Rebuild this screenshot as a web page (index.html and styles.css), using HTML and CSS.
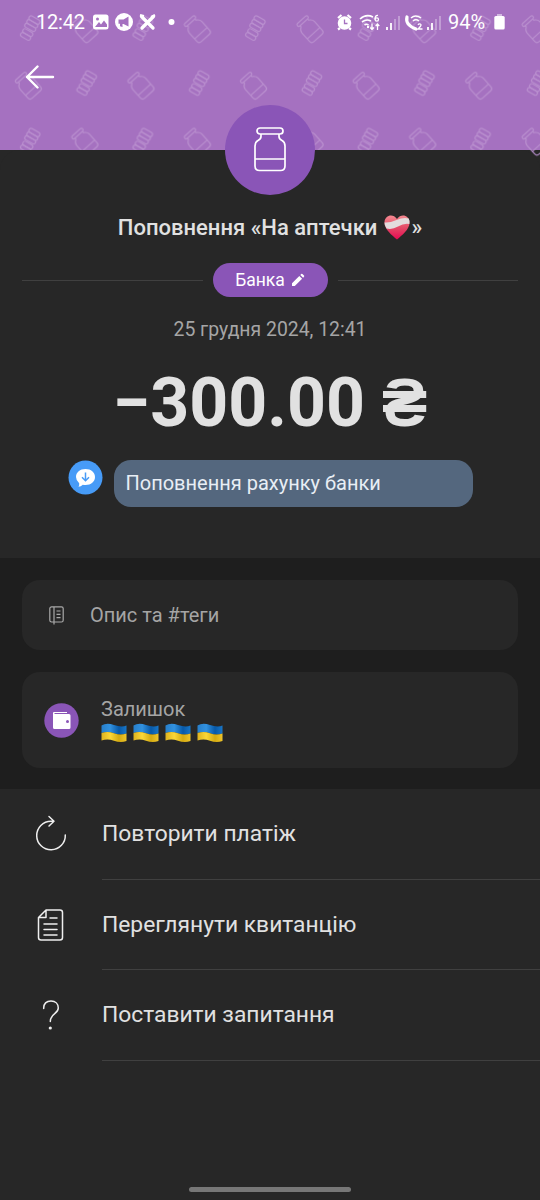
FILE: index.html
```html
<!DOCTYPE html>
<html lang="uk">
<head>
<meta charset="utf-8">
<title>Поповнення</title>
<link rel="stylesheet" href="styles.css">
</head>
<body>
<header class="hero">
  <svg class="hero-pattern" width="540" height="170">
    <defs>
      <g id="coins">
        <g transform="rotate(30)">
          <rect x="-6" y="-12" width="12" height="4.4" rx="2.2"/>
          <rect x="-6" y="-7.6" width="12" height="4.2" rx="2.1"/>
          <rect x="-6" y="-3.4" width="12" height="4.2" rx="2.1"/>
          <rect x="-5" y="2.2" width="11" height="4.4" rx="2.2"/>
          <rect x="-5" y="6.6" width="11" height="4.4" rx="2.2"/>
        </g>
      </g>
      <g id="jar">
        <g transform="rotate(-42)">
          <rect x="-7" y="-13" width="14" height="3.4" rx="1.7"/>
          <path d="M-5-9.6v1.5Q-8.5-6-8.5-3V8.500q0 3 3 3h11q3 0 3-3V-3q0-3-3.500-5.100v-1.500M-8.500 5h17"/>
        </g>
      </g>
      <pattern id="wallpaper" width="112.600" height="112.500" patternUnits="userSpaceOnUse">
        <use href="#coins" x="29.500" y="28.500"/>
        <use href="#jar" x="85" y="29.500"/>
        <use href="#jar" x="28.500" y="86"/>
        <use href="#coins" x="86" y="83.500"/>
      </pattern>
    </defs>
    <rect class="wall" width="540" height="170" fill="url(#wallpaper)"/>
  </svg>
  <div class="status">
    <span class="clock">12:42</span>
    <svg class="status-left" width="90" height="20" viewBox="0 0 90 20">
      <rect x="1" y="2.500" width="15.500" height="15" rx="2.500" fill="#fff"/>
      <circle cx="5.500" cy="7" r="1.500" fill="#a571c0"/>
      <path d="M3 15l4-5 2 2.500 3-4 3 4V15z" fill="#a571c0"/>
      <circle cx="32" cy="10" r="9" fill="#fff"/>
      <path d="M26.500 7.500h5l5-3v10l-5-2.500h-1v3l-2.500-.8v-2.500h-1.500z" fill="#a571c0"/>
      <path d="M49.500 4.500L61 16M61.500 4.500L50 16" stroke="#fff" stroke-width="3.300" stroke-linecap="round"/>
      <path d="M48 3l4 1M63 3l-4 2" stroke="#fff" stroke-width="2"/>
      <circle cx="79.500" cy="10" r="3" fill="#fff"/>
    </svg>
    <svg class="status-right" width="112" height="20" viewBox="0 0 112 20" fill="none" stroke="#fff" stroke-width="1.600">
      <circle cx="7.500" cy="11" r="6" fill="#fff"/>
      <path d="M1 6l3.500-3M14 6l-3.500-3M3 16l-2 1.500M12 16l2 1.500" stroke-width="2.200"/>
      <path d="M7.500 7.500v4h3" stroke="#a571c0" stroke-width="1.300"/>
      <path d="M23 7q6-5.500 13-2M25 10q4.500-3.500 9-1M27.500 13q2-1.500 4 0"/>
      <circle cx="31" cy="15" r="1.200" fill="#fff" stroke="none"/>
      <path d="M41 3.500q-3-.5-3 4M35 11.500v6m-1.800-2l1.800 2 1.800-2M40.500 18v-6m-1.800 2l1.800-2 1.800 2" stroke-width="1.300"/>
      <circle cx="39.800" cy="7.500" r="1.700" stroke-width="1.300"/>
      <path d="M50 18v-3M54 18v-7" stroke-width="1.800"/>
      <path d="M58 18V7M62 18V4" stroke-width="1.800" opacity=".35"/>
      <path d="M70 5q-2 8 9 12" stroke-width="3.200" stroke-linecap="round"/>
      <path d="M74 6q4.500-4 10 0M76 9q3-2.500 6 0" stroke-width="1.500"/>
      <path d="M81 13q.8-1.500 2.300-1 1.600.8-.2 2.700L81 17h4.500" stroke-width="1.300"/>
      <path d="M91 18v-3M95 18v-7" stroke-width="1.800"/>
      <path d="M99 18V7M103 18V4" stroke-width="1.800" opacity=".35"/>
    </svg>
    <span class="percent">94%</span>
    <svg class="battery" width="11" height="18" viewBox="0 0 11 18"><path d="M3 1h5v3H3z" fill="#fff" opacity=".5"/><rect x=".3" y="3" width="10.400" height="13.500" rx="1.500" fill="#fff"/></svg>
  </div>
  <svg class="back" width="30" height="24" viewBox="0 0 30 24"><path d="M12.500 1.500L2 12l10.500 10.500M2 12h26" fill="none" stroke="#fff" stroke-width="2.400" stroke-linecap="round" stroke-linejoin="round"/></svg>
</header>

<main class="sheet">
  <section class="summary">
    <div class="avatar">
      <svg width="36" height="48" viewBox="0 0 36 48" fill="none" stroke="#fff" stroke-width="1.700"><rect x="5" y="2" width="26" height="6" rx="3"/><path d="M9 8v2.500Q9 13 6 14.500Q3 16 3 20v20q0 4.500 4.500 4.500h21q4.500 0 4.500-4.500V20q0-4-3-5.500-3-1.500-3-4V8M3 33h30"/></svg>
    </div>
    <h1 class="title">Поповнення «На аптечки
      <svg class="heart" width="26" height="25" viewBox="0 0 26 25"><defs><linearGradient id="pink" x2="0" y2="1"><stop stop-color="#f58a91"/><stop offset=".5" stop-color="#e34b67"/><stop offset="1" stop-color="#e60852"/></linearGradient></defs><path d="M13 24.500C8 20 0 14 .5 7 1 0 9-2 13 4 17-2 25 0 25.500 7c.5 7-7.500 13-12.500 17.500z" fill="url(#pink)"/><path d="M.5 7.500q5 .5 12-2.500t12.300-1.500q1 2 .6 5.500-5.500-1-11.400 2.500T2.500 13.500Q.3 10 .5 7.500z" fill="#e3dcdd"/></svg>»</h1>
    <div class="category">
      <span class="rule"></span>
      <span class="chip">Банка <svg width="14" height="14" viewBox="0 0 14 14" fill="#fff"><path d="M1 10.200L8.300 2.900l2.800 2.800L3.800 13H1zM9.300 1.900l.9-.9q.6-.5 1.200 0L13 2.600q.5.600 0 1.200l-.9.900z"/></svg></span>
      <span class="rule"></span>
    </div>
    <p class="date">25 грудня 2024, 12:41</p>
    <p class="amount"><span class="minus">−</span>300.00 ₴</p>
    <div class="comment">
      <svg width="35" height="35" viewBox="0 0 35 35"><circle cx="17.500" cy="17.500" r="17" fill="#479bf7"/><path d="M17.500 9c5.500 0 9.500 3.300 9.500 8s-4 8-9.500 8q-1.500 0-2.700-.3-1.800 2-4.300 2.100 1-1.500.7-3.600Q8 20.500 8 17c0-4.700 4-8 9.500-8z" fill="#fff"/><path d="M17.500 12.500v8m-3.500-3.300l3.500 3.500 3.500-3.500" fill="none" stroke="#479bf7" stroke-width="1.500"/></svg>
      <p class="bubble">Поповнення рахунку банки</p>
    </div>
  </section>

  <section class="details">
    <div class="card note">
      <svg width="16" height="20" viewBox="0 0 16 20" fill="none" stroke="#a9a9a9" stroke-width="1.200"><rect x=".8" y="1.800" width="13.400" height="15.200" rx="1.800"/><path d="M5 2v17.500M7.500 6h4M7.500 9.300h4M7.500 12.600h4"/></svg>
      <span>Опис та #теги</span>
    </div>
    <div class="card balance">
      <svg width="35" height="35" viewBox="0 0 35 35"><circle cx="17.500" cy="17.500" r="17.200" fill="#8a55b7"/><path d="M10 9h13v1H10.500v1H25q1.500 0 1.500 1.500v12Q26.500 26 25 26H10.500Q9 26 9 24.500V10q0-1 1-1z" fill="#fff"/><circle cx="23.500" cy="18.500" r="1.500" fill="#8a55b7"/></svg>
      <div>
        <p class="label">Залишок</p>
        <div class="flags">
          <svg viewBox="0 0 26 20"><defs><linearGradient id="blue"><stop stop-color="#277fcb"/><stop offset=".35" stop-color="#3291df"/><stop offset=".7" stop-color="#0759a8"/><stop offset="1" stop-color="#1976c7"/></linearGradient><linearGradient id="gold"><stop stop-color="#ddb320"/><stop offset=".35" stop-color="#fbd737"/><stop offset=".7" stop-color="#d4aa10"/><stop offset="1" stop-color="#efc52b"/></linearGradient></defs><g id="flag"><path d="M.5 2.500q5-3 12.500-.5t12.500.5v8q-6 2-12.500-.3T.5 10z" fill="url(#blue)"/><path d="M.5 10q6-2.200 12.500.2t12.500.3v7.500q-6 2-12.500-.3T.5 17.500z" fill="url(#gold)"/></g></svg>
          <svg viewBox="0 0 26 20"><use href="#flag"/></svg>
          <svg viewBox="0 0 26 20"><use href="#flag"/></svg>
          <svg viewBox="0 0 26 20"><use href="#flag"/></svg>
        </div>
      </div>
    </div>
  </section>

  <nav class="actions">
    <div class="action">
      <svg viewBox="0 0 34 38"><path d="M31.300 20A14.300 14.300 0 1 1 17 6.200h3M15 1.500l5 4.700-5 4.800"/></svg>
      <span>Повторити платіж</span>
    </div>
    <div class="action">
      <svg viewBox="0 0 34 38"><path d="M12 4h14q2.500 0 2.500 2.500v25Q28.500 34 26 34H7q-2.500 0-2.500-2.500V11.500zM12 4v7.500H4.500M16 12h7M10 18h13M10 23.500h13M10 29h13"/></svg>
      <span>Переглянути квитанцію</span>
    </div>
    <div class="action">
      <svg viewBox="0 0 34 38"><path d="M9.700 12.500C9.500 7.500 12.500 5 17 5s7.300 2.800 7.300 7c0 6-8 5.500-8 13.500"/><circle cx="16.300" cy="32" r="1.600" class="dot"/></svg>
      <span>Поставити запитання</span>
    </div>
  </nav>
  <div class="home-bar"></div>
</main>
</body>
</html>
```
FILE: styles.css
```css
* { box-sizing: border-box; }
body { margin: 0; width: 540px; height: 1200px; overflow: hidden; background: #272727; color: #e1e1e1; font-family: Roboto, sans-serif; font-size: 20px; }
p, h1 { margin: 0; }
svg { display: block; flex: none; }
.hero { position: relative; height: 150px; background: #a571c0; }
.hero-pattern { position: absolute; top: 0; left: 0; }
#coins, #jar { fill: none; stroke: #ba90cf; stroke-width: 1.1; }
.status { position: relative; display: flex; align-items: center; height: 44px; padding-left: 36px; color: #fff; }
.clock { width: 56px; font-size: 20px; letter-spacing: -.2px; }
.status-right { margin-left: 155px; }
.percent { margin-left: -1px; width: 46px; font-size: 20px; }
.battery { margin-left: 0; }
.back { position: relative; margin: 21px 0 0 25px; }
.sheet { position: relative; display: flex; flex-direction: column; height: 1050px; background: #272727; border-radius: 20px 20px 0 0; }
.summary { display: flex; flex-direction: column; align-items: center; height: 408px; }
.avatar { display: flex; align-items: center; justify-content: center; width: 90px; height: 90px; margin-top: -45px; border-radius: 50%; background: #8a55b7; }
.title { display: flex; align-items: center; gap: 7px; height: 30px; margin-top: 17px; font-size: 22px; font-weight: 500; white-space: nowrap; }
.heart { margin-right: -6px; }
.category { display: flex; align-items: center; gap: 10px; width: 496px; height: 34px; margin-top: 21px; }
.rule { flex: 1; height: 1px; background: #404040; }
.chip { display: flex; align-items: center; justify-content: center; gap: 6px; width: 115px; height: 34px; border-radius: 17px; background: #8a55b7; color: #fff; font-size: 17.5px; }
.date { height: 28px; margin-top: 19px; line-height: 28px; font-size: 19.4px; color: #a5a5a5; }
.amount { height: 80px; margin-top: 19px; line-height: 80px; font-size: 68px; font-weight: 700; white-space: nowrap; }
.comment { display: flex; gap: 11px; width: 405px; margin-top: 17px; }
.bubble { flex: 1; height: 47px; padding-left: 12px; border-radius: 17px; background: #54677e; color: #e8eef5; line-height: 47px; }
.details { height: 231px; padding: 22px 22px 0; background: #1e1e1e; }
.card { display: flex; align-items: center; border-radius: 18px; background: #272727; color: #a5a5a5; }
.note { height: 70px; padding-left: 27px; gap: 25px; }
.balance { height: 96px; margin-top: 22px; padding-left: 22px; gap: 22px; }
.label { line-height: 24px; }
.flags { display: flex; gap: 6px; margin-top: 2px; }
.flags svg { width: 26px; height: 20px; }
.actions { padding-left: 34px; }
.action { display: flex; align-items: center; height: 90.500px; gap: 34px; font-size: 22.8px; }
.action svg { width: 34px; height: 38px; fill: none; stroke: #eee; stroke-width: 1.500; stroke-linecap: round; stroke-linejoin: round; }
.action .dot { fill: #eee; stroke: none; }
.action span { flex: 1; height: 100%; line-height: 90px; border-bottom: 1px solid #404040; }
.home-bar { width: 162px; height: 5px; margin: auto auto 8px; border-radius: 3px; background: #777; }
```
